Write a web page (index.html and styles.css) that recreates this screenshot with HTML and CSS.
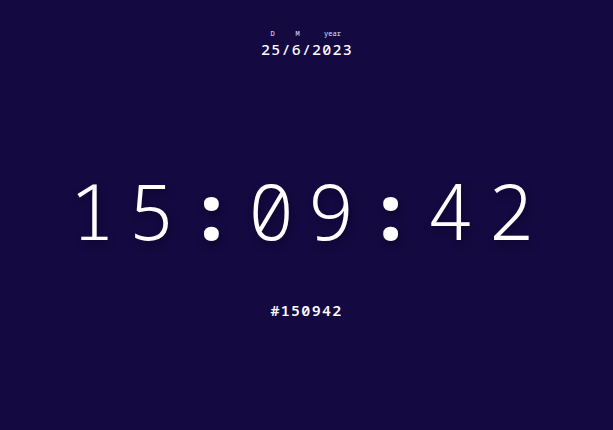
FILE: index.html
```html
<!DOCTYPE html>
<html>
<head>
<meta charset="utf-8">
<link rel="stylesheet" href="styles.css">
</head>
<body>
<main class="page">
  <section class="date">
    <div class="labels"><span class="lab lab-d">D</span><span class="lab lab-m">M</span><span class="lab lab-y">year</span></div>
    <div class="date-value">25/6/2023</div>
  </section>
  <div class="clock">15<span class="sep">:</span>09<span class="sep">:</span>42</div>
  <div class="hex">#150942</div>
</main>
</body>
</html>
```
FILE: styles.css
```css
html, body {
  margin: 0;
  padding: 0;
  height: 100%;
}
body {
  background: #150942;
  color: #ffffff;
  font-family: "Noto Sans Mono", "DejaVu Sans Mono", monospace;
}
.page {
  height: 430px;
  display: flex;
  flex-direction: column;
  align-items: center;
}
.date {
  margin-top: 29px;
  display: flex;
  flex-direction: column;
  align-items: center;
}
.labels {
  display: flex;
  gap: 10px;
  font-size: 7px;
  line-height: 10px;
  color: #e6e2f4;
  padding-left: 2px;
}
.lab {
  text-align: center;
}
.lab-d { width: 20px; }
.lab-m { width: 10px; }
.lab-y { width: 40px; }
.date-value {
  font-size: 15px;
  line-height: 20px;
  font-weight: 500;
  letter-spacing: 1.2px;
  padding-left: 1px;
}
.clock {
  margin-top: 96px;
  font-size: 78px;
  line-height: 110px;
  font-weight: 350;
  letter-spacing: 13px;
  padding-left: 2px;
  font-variant-numeric: slashed-zero;
  text-shadow: 2px 4px 8px rgba(0, 0, 0, 0.4);
}
.sep {
  font-weight: 800;
}
.hex {
  margin-top: 35px;
  font-size: 15px;
  line-height: 20px;
  font-weight: 600;
  letter-spacing: 1.3px;
}
```
